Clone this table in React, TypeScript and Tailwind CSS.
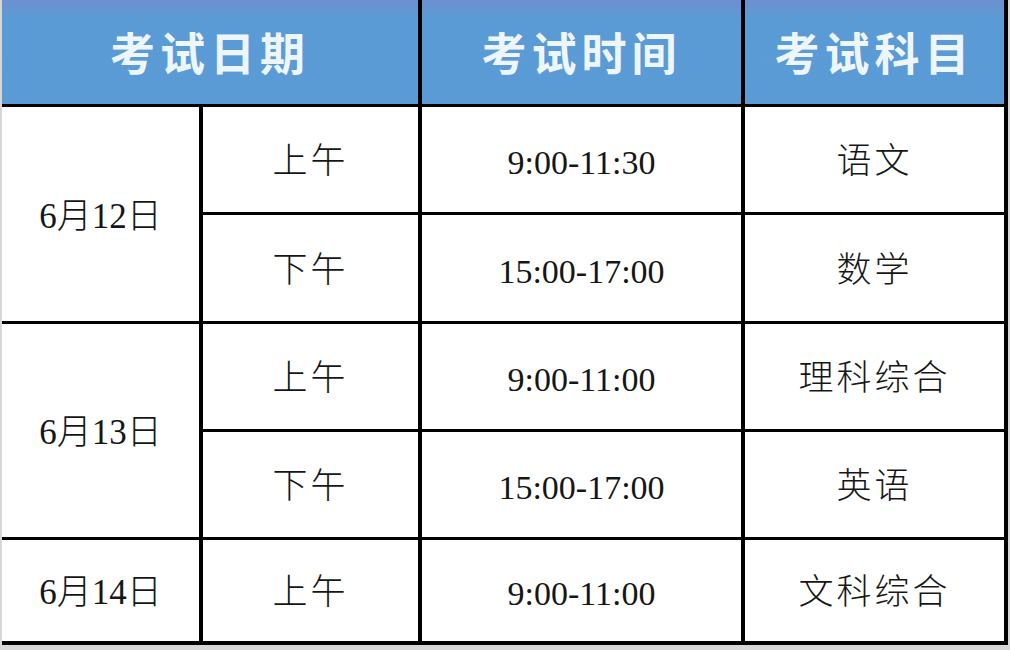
import React from "react"

type Slot = {
  period: string
  time: string
  subject: string
}

type Day = {
  date: string
  slots: Slot[]
}

const schedule: Day[] = [
  {
    date: "6月12日",
    slots: [
      { period: "上午", time: "9:00-11:30", subject: "语文" },
      { period: "下午", time: "15:00-17:00", subject: "数学" },
    ],
  },
  {
    date: "6月13日",
    slots: [
      { period: "上午", time: "9:00-11:00", subject: "理科综合" },
      { period: "下午", time: "15:00-17:00", subject: "英语" },
    ],
  },
  {
    date: "6月14日",
    slots: [{ period: "上午", time: "9:00-11:00", subject: "文科综合" }],
  },
]

const headCell =
  "flex items-center justify-center bg-[linear-gradient(to_bottom,#6c90d2,#5b9bd5_18%,#5a9bd6)] pt-[10px] text-[45px] font-semibold tracking-[5px] text-[#eef6fd]"

const bodyCell =
  "flex items-center justify-center bg-white pt-[6px] text-[#161616]"

export default function App() {
  return (
    <div className="h-[650px] w-[1010px] bg-[#d6d6d6] pl-[2px] font-['Liberation_Serif','Noto_Sans_CJK_SC',serif]">
      <div className="grid w-[1006px] grid-cols-[197px_215px_319px_259px] grid-rows-[104px_105px_106px_105px_105px_101px] gap-x-[4px] gap-y-[3px] bg-black pr-[4px] pb-[4px]">
        <div className={`${headCell} col-span-2`}>考试日期</div>
        <div className={headCell}>考试时间</div>
        <div className={headCell}>考试科目</div>

        {schedule.map((day) => (
          <React.Fragment key={day.date}>
            <div
              className={`${bodyCell} text-[35px] font-light ${day.slots.length === 2 ? "row-span-2" : ""}`}
            >
              {day.date}
            </div>
            {day.slots.map((slot) => (
              <React.Fragment key={slot.time + slot.subject}>
                <div className={`${bodyCell} text-[35px] font-light tracking-[3px]`}>
                  {slot.period}
                </div>
                <div className={`${bodyCell} text-[34px]`}>{slot.time}</div>
                <div className={`${bodyCell} text-[35px] font-light tracking-[3px]`}>
                  {slot.subject}
                </div>
              </React.Fragment>
            ))}
          </React.Fragment>
        ))}
      </div>
    </div>
  )
}
